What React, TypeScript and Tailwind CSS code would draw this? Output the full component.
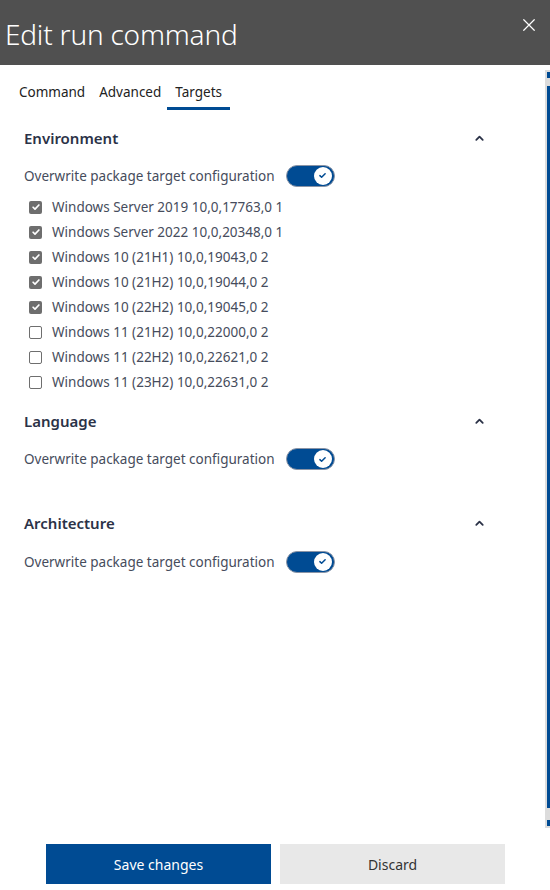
import React, { useState } from 'react';

const envs = [
  { label: 'Windows Server 2019 10,0,17763,0 1', checked: true },
  { label: 'Windows Server 2022 10,0,20348,0 1', checked: true },
  { label: 'Windows 10 (21H1) 10,0,19043,0 2', checked: true },
  { label: 'Windows 10 (21H2) 10,0,19044,0 2', checked: true },
  { label: 'Windows 10 (22H2) 10,0,19045,0 2', checked: true },
  { label: 'Windows 11 (21H2) 10,0,22000,0 2', checked: false },
  { label: 'Windows 11 (22H2) 10,0,22621,0 2', checked: false },
  { label: 'Windows 11 (23H2) 10,0,22631,0 2', checked: false },
];

function Toggle() {
  return (
    <span className="flex items-center justify-end w-[49px] h-[22px] rounded-full bg-[#004b93] border border-[#8a94a6] pr-[2px]">
      <span className="flex items-center justify-center w-[18px] h-[18px] rounded-full bg-white">
        <svg viewBox="0 0 12 12" className="w-[9px] h-[9px]" fill="none" stroke="#004b93" strokeWidth={2} strokeLinecap="round" strokeLinejoin="round">
          <path d="M2.5 6.2l2.3 2.2 4.7-4.8" />
        </svg>
      </span>
    </span>
  );
}

function Chevron() {
  return (
    <svg viewBox="0 0 12 12" className="w-[11px] h-[11px]" fill="none" stroke="#2b3247" strokeWidth={2} strokeLinecap="round" strokeLinejoin="round">
      <path d="M2.5 7.5L6 4l3.5 3.5" />
    </svg>
  );
}

function SectionHeader({ title }: { title: string }) {
  return (
    <div className="flex items-center justify-between pr-[60px]">
      <h2 className="text-[15px] font-semibold text-[#2b3247]">{title}</h2>
      <Chevron />
    </div>
  );
}

function OverwriteRow() {
  return (
    <div className="flex items-center gap-[11px] text-[13.5px] text-[#464c5c]">
      <span>Overwrite package target configuration</span>
      <Toggle />
    </div>
  );
}

export default function App() {
  const [tab] = useState('Targets');

  return (
    <div className="w-[550px] h-[890px] flex flex-col bg-white overflow-hidden" style={{ fontFamily: '"Noto Sans", "Open Sans", sans-serif' }}>
      <div className="h-[65px] shrink-0 bg-[#505050] flex items-start justify-between pl-[5px] pr-[14px]">
        <h1 className="text-[28px] font-light text-white leading-none mt-[20px] tracking-[-0.2px]">Edit run command</h1>
        <svg viewBox="0 0 16 16" className="w-[14px] h-[14px] mt-[18px]" fill="none" stroke="#ffffff" strokeWidth={1.4} strokeLinecap="round">
          <path d="M2 2l12 12M14 2L2 14" />
        </svg>
      </div>

      <div className="flex-1 flex min-h-0">
        <div className="flex-1 flex flex-col">
          <div className="flex gap-[14px] pl-[19px] pt-[17px] text-[13.5px] text-[#222]">
            {['Command', 'Advanced', 'Targets'].map((t) => (
              <div key={t} className="flex flex-col">
                <span>{t}</span>
                <span className={`h-[3px] mt-[5px] -mx-[8px] ${t === tab ? 'bg-[#004b93]' : ''}`} />
              </div>
            ))}
          </div>

          <div className="pl-[24px] pt-[17px] flex flex-col">
            <SectionHeader title="Environment" />
            <div className="mt-[15px]">
              <OverwriteRow />
            </div>
            <div className="flex flex-col mt-[8px] pl-[5px]">
              {envs.map((e) => (
                <label key={e.label} className="flex items-center gap-[10px] h-[25px] text-[13.5px] text-[#464c5c]">
                  {e.checked ? (
                    <span className="w-[13px] h-[13px] rounded-[2px] bg-[#6e6e6e] flex items-center justify-center">
                      <svg viewBox="0 0 12 12" className="w-[10px] h-[10px]" fill="none" stroke="#fff" strokeWidth={2} strokeLinecap="round" strokeLinejoin="round">
                        <path d="M2.5 6.3l2.3 2.3 4.7-5" />
                      </svg>
                    </span>
                  ) : (
                    <span className="w-[13px] h-[13px] rounded-[2px] border border-[#6e6e6e] bg-white" />
                  )}
                  <span>{e.label}</span>
                </label>
              ))}
            </div>

            <div className="mt-[15px]">
              <SectionHeader title="Language" />
            </div>
            <div className="mt-[16px]">
              <OverwriteRow />
            </div>

            <div className="mt-[42px]">
              <SectionHeader title="Architecture" />
            </div>
            <div className="mt-[16px]">
              <OverwriteRow />
            </div>
          </div>
        </div>

        <div className="w-[5px] mt-[5px] mb-[16px] bg-[#dcdcdc] flex flex-col items-end">
          <span className="w-[3px] h-[6px] mt-[2px] bg-[#004b93]" />
          <span className="w-[3px] flex-1 mt-[8px] mb-[12px] bg-[#004b93]" />
          <span className="w-[3px] h-[6px] mb-[2px] bg-[#004b93]" />
        </div>
      </div>

      <div className="shrink-0 flex gap-[9px] pl-[46px] pb-[6px]">
        <button className="w-[225px] h-[40px] bg-[#004b93] text-white text-[14px]">Save changes</button>
        <button className="w-[225px] h-[40px] bg-[#e8e8e8] text-[#333] text-[14px]">Discard</button>
      </div>
    </div>
  );
}
